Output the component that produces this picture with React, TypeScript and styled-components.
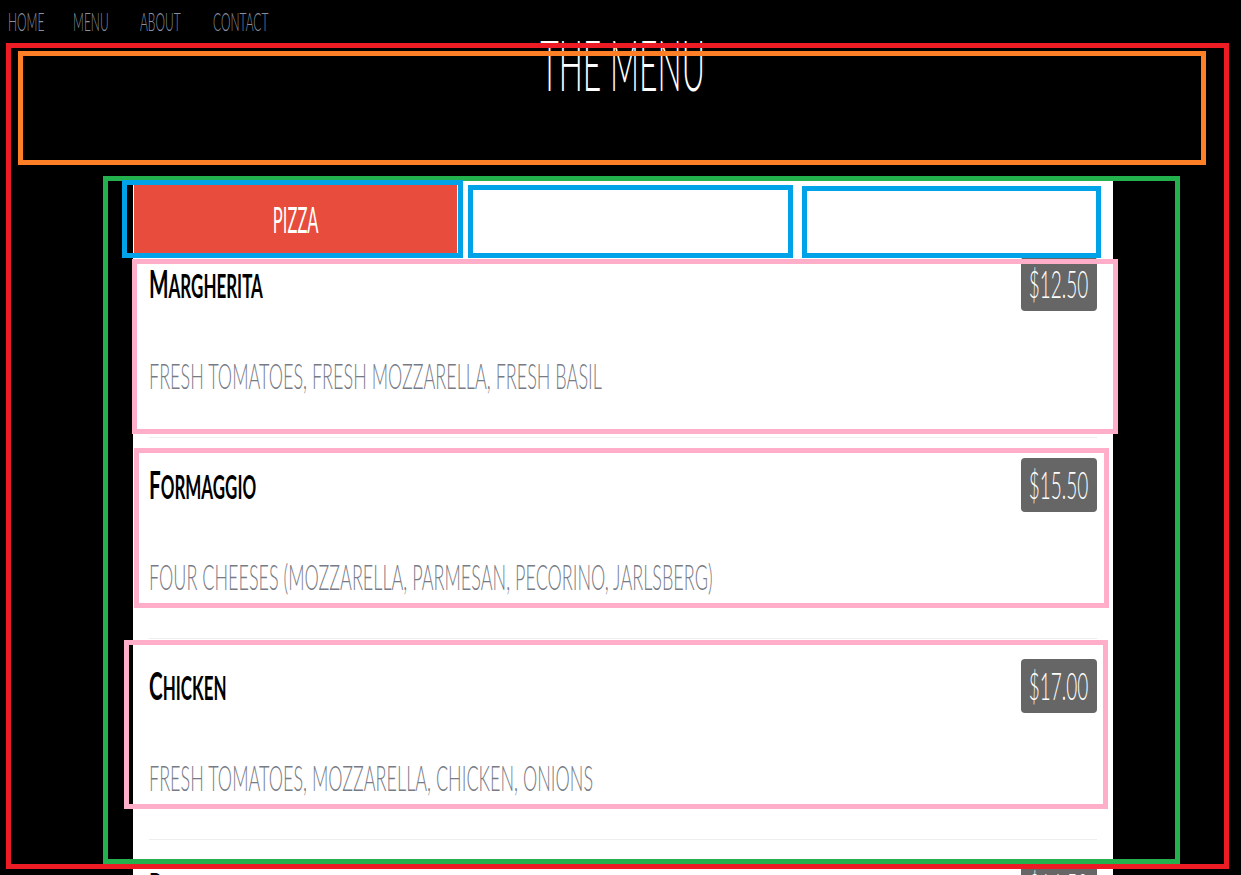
import React from "react";
import styled, { createGlobalStyle } from "styled-components";

const Global = createGlobalStyle`
  html, body {
    margin: 0;
    padding: 0;
    background: #000;
    overflow: hidden;
  }
  body {
    font-family: Lato, "Liberation Sans", sans-serif;
  }
  * { box-sizing: border-box; }
`;

const Page = styled.div`
  position: relative;
  height: 875px;
  overflow: hidden;
`;

const Nav = styled.nav`
  display: grid;
  grid-template-columns: 65px 67px 73px auto;
  padding: 6px 0 0 8px;
  height: 36px;
`;

const NavLink = styled.a`
  display: block;
  font-size: 25px;
  line-height: 30px;
  font-weight: 300;
  text-transform: uppercase;
  color: #8690a3;
  text-decoration: none;
  white-space: nowrap;
  transform: scaleX(0.48);
  transform-origin: left center;
`;

const Header = styled.header`
  padding: 0 0 90px 4px;
  text-align: center;
`;

const Heading = styled.h1`
  margin: 0;
  font-size: 71px;
  line-height: 55px;
  font-weight: 300;
  color: #fff;
  text-transform: uppercase;
  transform: scaleX(0.45);
`;

const Card = styled.main`
  width: 980px;
  margin-left: 133px;
  background: #fff;
  padding-top: 4px;
`;

const Tabs = styled.div`
  display: flex;
  height: 68px;
`;

const Tab = styled.button<{ $active?: boolean }>`
  width: 323px;
  height: 68px;
  margin-left: 1px;
  padding: 0;
  border: 0;
  background: ${(p) => (p.$active ? "#e74c3c" : "#fff")};
  color: #fff;
  font-family: inherit;
  font-size: 36px;
  font-weight: 400;
  line-height: 68px;
  text-transform: uppercase;
  cursor: pointer;
`;

const TabLabel = styled.span`
  display: inline-block;
  transform: scaleX(0.46);
`;

const Item = styled.article`
  padding: 4px 16px 0;
`;

const Row = styled.div`
  display: flex;
  justify-content: space-between;
  align-items: flex-start;
  height: 54px;
`;

const Name = styled.h3`
  margin: 9px 0 0;
  font-size: 32px;
  line-height: 40px;
  font-weight: 700;
  color: #000;
  text-transform: uppercase;
  white-space: nowrap;
  transform: scaleX(0.53);
  transform-origin: left center;
  &::first-letter {
    font-size: 1.22em;
    line-height: 0;
  }
`;

const Price = styled.span`
  display: flex;
  align-items: center;
  justify-content: center;
  width: 76px;
  height: 54px;
  border-radius: 4px;
  background: #666;
  color: #fff;
  font-size: 38px;
  font-weight: 300;
  line-height: 1.2;
`;

const PriceText = styled.span`
  display: inline-block;
  white-space: nowrap;
  transform: scaleX(0.5);
`;

const Desc = styled.p`
  margin: 43px 0 0;
  font-size: 35px;
  line-height: 42px;
  font-weight: 300;
  color: #777b85;
  text-transform: uppercase;
  white-space: nowrap;
  transform: scaleX(0.515);
  transform-origin: left center;
`;

const Rule = styled.hr`
  border: 0;
  border-top: 1px solid #eee;
  margin: 41px 0 16px;
`;

const Mark = styled.div<{ $c: string; $x: number; $y: number; $w: number; $h: number }>`
  position: absolute;
  left: ${(p) => p.$x}px;
  top: ${(p) => p.$y}px;
  width: ${(p) => p.$w}px;
  height: ${(p) => p.$h}px;
  border: 5px solid ${(p) => p.$c};
  pointer-events: none;
  z-index: 10;
`;

const items = [
  { name: "Margherita", price: "$12.50", desc: "Fresh tomatoes, fresh mozzarella, fresh basil" },
  { name: "Formaggio", price: "$15.50", desc: "Four cheeses (mozzarella, parmesan, pecorino, jarlsberg)" },
  { name: "Chicken", price: "$17.00", desc: "Fresh tomatoes, mozzarella, chicken, onions" },
  { name: "Pineapple'o'clock", price: "$16.50", desc: "Fresh tomatoes, mozzarella, fresh pineapple, bacon, fresh basil" },
];

const marks = [
  { c: "#ed1c24", x: 6, y: 43, w: 1223, h: 826 },
  { c: "#ff7f27", x: 18, y: 51, w: 1188, h: 114 },
  { c: "#22b14c", x: 103, y: 176, w: 1077, h: 688 },
  { c: "#00a2e8", x: 122, y: 180, w: 341, h: 78 },
  { c: "#00a2e8", x: 468, y: 185, w: 325, h: 73 },
  { c: "#00a2e8", x: 802, y: 186, w: 299, h: 72 },
  { c: "#ffaec9", x: 132, y: 259, w: 986, h: 175 },
  { c: "#ffaec9", x: 134, y: 448, w: 975, h: 160 },
  { c: "#ffaec9", x: 124, y: 640, w: 984, h: 169 },
];

export default function App() {
  return (
    <Page>
      <Global />
      <Nav>
        <NavLink href="#">Home</NavLink>
        <NavLink href="#">Menu</NavLink>
        <NavLink href="#">About</NavLink>
        <NavLink href="#">Contact</NavLink>
      </Nav>
      <Header>
        <Heading>The Menu</Heading>
      </Header>
      <Card>
        <Tabs>
          <Tab $active>
            <TabLabel>Pizza</TabLabel>
          </Tab>
          <Tab />
          <Tab />
        </Tabs>
        {items.map((it) => (
          <Item key={it.name}>
            <Row>
              <Name>{it.name}</Name>
              <Price>
                <PriceText>{it.price}</PriceText>
              </Price>
            </Row>
            <Desc>{it.desc}</Desc>
            <Rule />
          </Item>
        ))}
      </Card>
      {marks.map((m, i) => (
        <Mark key={i} $c={m.c} $x={m.x} $y={m.y} $w={m.w} $h={m.h} />
      ))}
    </Page>
  );
}
